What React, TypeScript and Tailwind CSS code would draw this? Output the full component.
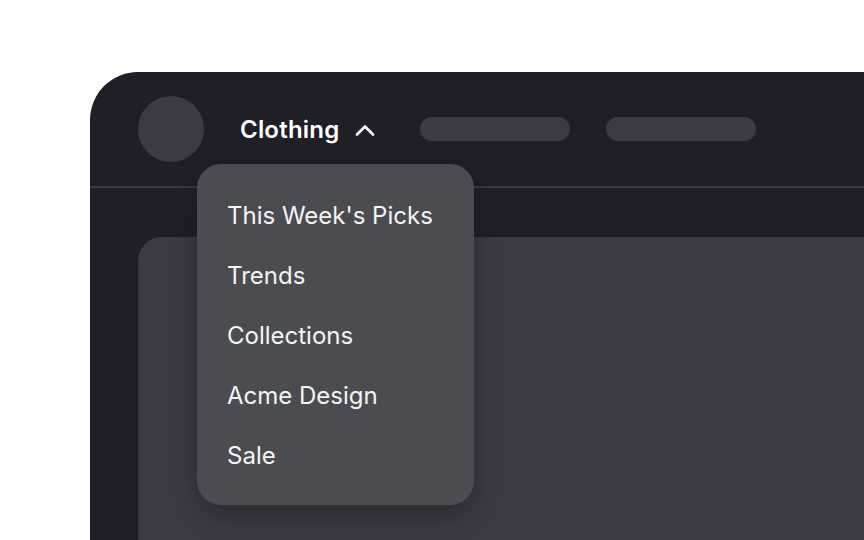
const items = ["This Week's Picks", "Trends", "Collections", "Acme Design", "Sale"];

function ChevronUp() {
  return (
    <svg width="20" height="12" viewBox="0 0 20 12" fill="none" className="shrink-0">
      <path d="M2 10.5 L10 2.5 L18 10.5" stroke="#ffffff" strokeWidth="2.6" strokeLinecap="round" strokeLinejoin="round" />
    </svg>
  );
}

export default function App() {
  return (
    <div
      className="h-[540px] w-[864px] overflow-hidden bg-white pl-[90px] pt-[72px]"
      style={{ fontFamily: "Inter, 'Liberation Sans', sans-serif" }}
    >
      <div className="relative flex h-full w-[820px] flex-col rounded-tl-[48px] bg-[#1f1f28]">
        <header className="flex h-[116px] shrink-0 items-center border-b-2 border-[#3a3a43] px-12">
          <div className="h-[66px] w-[66px] shrink-0 rounded-full bg-[#3b3b44]" />
          <button className="ml-9 flex items-center gap-4 pt-[2px] text-[24px] font-semibold tracking-[0.2px] text-white">
            <span>Clothing</span>
            <ChevronUp />
          </button>
          <div className="ml-[45px] h-6 w-[150px] rounded-full bg-[#3b3b44]" />
          <div className="ml-9 h-6 w-[150px] rounded-full bg-[#3b3b44]" />
        </header>
        <div className="flex flex-1 pl-12 pt-[49px]">
          <div className="flex-1 rounded-tl-[24px] bg-[#3b3b44]" />
        </div>

        <div className="absolute left-[107px] top-[92px] w-[277px] rounded-[24px] bg-[#4b4c52] px-[30px] pb-[19px] pt-[22px] shadow-[0_10px_30px_rgba(0,0,0,0.3)]">
          <ul>
            {items.map((item) => (
              <li key={item} className="flex h-[60px] items-center text-[24px] text-[#f4f4f5]">
                {item}
              </li>
            ))}
          </ul>
        </div>
      </div>
    </div>
  );
}
